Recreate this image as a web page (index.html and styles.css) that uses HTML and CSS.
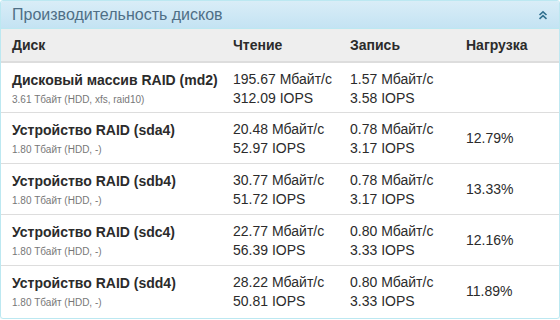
FILE: index.html
```html
<!DOCTYPE html>
<html>
<head>
<meta charset="utf-8">
<link rel="stylesheet" href="styles.css">
</head>
<body>
<div class="panel">
  <div class="panel-heading">
    <span class="panel-title">Производительность дисков</span>
    <svg class="collapse" width="10" height="10" viewBox="0 0 10 10"><path d="M1.5 5 L5 1.8 L8.5 5 M1.5 8.8 L5 5.6 L8.5 8.8" fill="none" stroke="#31708f" stroke-width="1.6"/></svg>
  </div>
  <table class="disks">
    <thead>
      <tr><th class="c-name">Диск</th><th class="c-read">Чтение</th><th class="c-write">Запись</th><th class="c-load">Нагрузка</th></tr>
    </thead>
    <tbody>
      <tr>
        <td><div class="name">Дисковый массив RAID (md2)</div><div class="sub">3.61 Тбайт (HDD, xfs, raid10)</div></td>
        <td>195.67 Мбайт/с<br>312.09 IOPS</td>
        <td>1.57 Мбайт/с<br>3.58 IOPS</td>
        <td class="load"></td>
      </tr>
      <tr>
        <td><div class="name">Устройство RAID (sda4)</div><div class="sub">1.80 Тбайт (HDD, -)</div></td>
        <td>20.48 Мбайт/с<br>52.97 IOPS</td>
        <td>0.78 Мбайт/с<br>3.17 IOPS</td>
        <td class="load">12.79%</td>
      </tr>
      <tr>
        <td><div class="name">Устройство RAID (sdb4)</div><div class="sub">1.80 Тбайт (HDD, -)</div></td>
        <td>30.77 Мбайт/с<br>51.72 IOPS</td>
        <td>0.78 Мбайт/с<br>3.17 IOPS</td>
        <td class="load">13.33%</td>
      </tr>
      <tr>
        <td><div class="name">Устройство RAID (sdc4)</div><div class="sub">1.80 Тбайт (HDD, -)</div></td>
        <td>22.77 Мбайт/с<br>56.39 IOPS</td>
        <td>0.80 Мбайт/с<br>3.33 IOPS</td>
        <td class="load">12.16%</td>
      </tr>
      <tr>
        <td><div class="name">Устройство RAID (sdd4)</div><div class="sub">1.80 Тбайт (HDD, -)</div></td>
        <td>28.22 Мбайт/с<br>50.81 IOPS</td>
        <td>0.80 Мбайт/с<br>3.33 IOPS</td>
        <td class="load">11.89%</td>
      </tr>
    </tbody>
  </table>
</div>
</body>
</html>
```
FILE: styles.css
```css
html, body {
  margin: 0;
  padding: 0;
  background: #ffffff;
}
body {
  font-family: "Liberation Sans", Arial, sans-serif;
  font-size: 14px;
  color: #2b2b2b;
}
.panel {
  width: 558px;
  height: 317px;
  border: 1px solid #bce8f1;
  border-radius: 3px;
  overflow: hidden;
  box-shadow: 0 1px 1px rgba(0,0,0,0.05);
}
.panel-heading {
  height: 28px;
  box-sizing: border-box;
  padding: 0 11px;
  display: flex;
  align-items: center;
  justify-content: space-between;
  background: linear-gradient(to bottom, #d9edf7 0%, #c4e3f3 100%);
  border-bottom: 1px solid #bce8f1;
}
.panel-title {
  font-size: 16px;
  color: #4f6f86;
}
.collapse {
  margin-right: 0;
  margin-top: 1px;
}
.disks {
  width: 100%;
  border-collapse: collapse;
}
.disks th {
  text-align: left;
  font-weight: bold;
  height: 32px;
  padding: 0 0 0 11px;
  background: #eeeeee;
  border-bottom: 2px solid #dddddd;
  color: #2b2b2b;
}
.c-name { width: 210px; }
.c-read { width: 106px; }
.c-write { width: 105px; }
.disks td {
  vertical-align: top;
  padding: 7px 0 0 11px;
  height: 43px;
  line-height: 19px;
  border-top: 1px solid #dddddd;
}
.disks tbody tr:first-child td { border-top: none; height: 42px; }
.name {
  font-weight: bold;
  line-height: 20px;
}
.sub {
  font-size: 10px;
  color: #777777;
  line-height: 20px;
}
.disks td.load {
  vertical-align: middle;
  padding-top: 0;
  padding-left: 11px;
}
```
